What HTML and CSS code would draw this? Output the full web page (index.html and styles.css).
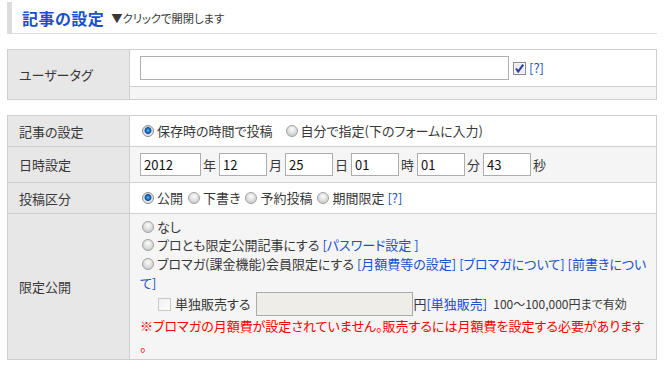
FILE: index.html
```html
<!DOCTYPE html>
<html lang="ja">
  <head>
    <meta charset="UTF-8" />
    <title>記事の設定</title>
    <link rel="stylesheet" href="styles.css">
  </head>
  <body>
    <div class="heading">
      <span class="heading-title">記事の設定</span>
      <span class="heading-note">▼クリックで開閉します</span>
    </div>

    <table class="form-table">
      <tr>
        <th rowspan="2">ユーザータグ</th>
        <td>
          <div class="line">
            <input type="text" class="tag-input" />
            <svg class="check-icon" width="13" height="13" viewBox="0 0 13 13">
              <rect x="0.5" y="0.5" width="12" height="12" fill="#dfe3ee" stroke="#8a8a8a" />
              <rect x="1.5" y="1.5" width="10" height="10" fill="#e9ecf4" stroke="#f6f7fb" />
              <path d="M3 6.5 L5.2 9.6 L10.2 2.6" fill="none" stroke="#2b3f9a" stroke-width="2" />
            </svg>
            <a class="help" href="#">[?]</a>
          </div>
        </td>
      </tr>
      <tr>
        <td class="spacer"></td>
      </tr>
    </table>

    <table class="form-table">
      <tr>
        <th>記事の設定</th>
        <td>
          <div class="line">
            <input type="radio" name="post-time" checked />
            <span class="gap-wide">保存時の時間で投稿</span>
            <input type="radio" name="post-time" />
            <span>自分で指定(下のフォームに入力)</span>
          </div>
        </td>
      </tr>
      <tr class="row-alt">
        <th>日時設定</th>
        <td>
          <div class="line">
            <input type="text" class="date-input year" value="2012" /><span class="unit">年</span>
            <input type="text" class="date-input" value="12" /><span class="unit">月</span>
            <input type="text" class="date-input" value="25" /><span class="unit">日</span>
            <input type="text" class="date-input" value="01" /><span class="unit">時</span>
            <input type="text" class="date-input" value="01" /><span class="unit">分</span>
            <input type="text" class="date-input" value="43" /><span class="unit">秒</span>
          </div>
        </td>
      </tr>
      <tr>
        <th>投稿区分</th>
        <td>
          <div class="line">
            <input type="radio" name="status" checked /><span class="gap">公開</span>
            <input type="radio" name="status" /><span class="gap">下書き</span>
            <input type="radio" name="status" /><span class="gap">予約投稿</span>
            <input type="radio" name="status" /><span class="gap">期間限定</span>
            <a class="help" href="#">[?]</a>
          </div>
        </td>
      </tr>
      <tr class="row-alt">
        <th>限定公開</th>
        <td class="limited">
          <label class="choice"><input type="radio" name="limit" />なし</label>
          <label class="choice"><input type="radio" name="limit" />プロとも限定公開記事にする <a href="#">[パスワード設定 ]</a></label>
          <label class="choice wrap"><input type="radio" name="limit" />ブロマガ(課金機能)会員限定にする <a href="#">[月額費等の設定]</a> <a href="#">[ブロマガについて]</a> <a href="#">[前書きについて]</a></label>
          <div class="sale">
            <span class="sale-check"></span>
            <span class="sale-label">単独販売する</span>
            <input type="text" class="price-input" disabled /><span>円</span><a href="#">[単独販売]</a>
            <span class="price-note">100〜100,000円まで有効</span>
          </div>
          <p class="warning">※ブロマガの月額費が設定されていません。販売するには月額費を設定する必要があります。</p>
        </td>
      </tr>
    </table>
  </body>
</html>
```

FILE: styles.css
```css
body {
  margin: 0;
  padding: 2px 8px 0 7px;
  font-family: "Noto Sans CJK JP", sans-serif;
  font-size: 13px;
  font-feature-settings: "palt";
  color: #383838;
  background: #fff;
}

a {
  color: #1c4fc9;
  text-decoration: none;
}

.heading {
  display: flex;
  align-items: center;
  height: 31px;
  padding-left: 10px;
  border-left: 5px solid #dcdcdc;
  border-bottom: 1px solid #dcdcdc;
}

.heading-title {
  color: #1c4fc9;
  font-size: 16px;
  font-weight: 700;
  letter-spacing: 0.5px;
}

.heading-note {
  margin-left: 7px;
  font-size: 11.3px;
}

.form-table {
  width: 100%;
  margin-top: 15px;
  border-collapse: collapse;
  border: 1px solid #cfcfcf;
}

.form-table th {
  width: 100px;
  padding: 0 10px 0 11px;
  background: #e7e7e7;
  border: 1px solid #cfcfcf;
  font-weight: normal;
  text-align: left;
}

.form-table td {
  padding: 6px 10px;
  border: 1px solid #cfcfcf;
  line-height: 18px;
}

.form-table td.spacer {
  height: 12px;
  padding: 0;
  background: #f5f5f5;
}

.row-alt td {
  background: #f5f5f5;
}

.line {
  display: flex;
  align-items: center;
  min-height: 18px;
}

.tag-input {
  box-sizing: border-box;
  width: 369px;
  height: 24px;
  margin: 0;
  border: 1px solid #aeaeb3;
}

.check-icon {
  margin: 0 3px 0 4px;
}

.help {
  font-size: 13px;
}

input[type="radio"] {
  appearance: none;
  box-sizing: border-box;
  width: 12px;
  height: 12px;
  margin: 0 3px 0 2px;
  border: 1px solid #a3a3a3;
  border-radius: 50%;
  background: radial-gradient(circle at 50% 35%, #fdfdfd 0, #e6e6e6 3px, #cfcfcf 6px);
  flex: none;
}

input[type="radio"]:checked {
  border-color: #8c8c8c;
  background: radial-gradient(circle at 50% 45%, #7fd0ff 0, #2a88d8 1.2px, #0a4f9a 3px, #d9d9d9 3.8px, #f4f4f4 6px);
}

.gap {
  margin-right: 3px;
}

.gap-wide {
  margin-right: 11px;
}

.date-input {
  box-sizing: border-box;
  width: 48px;
  height: 23px;
  margin: 0 2px 0 0;
  padding: 0 3px;
  border: 1px solid #abadb3;
  font: inherit;
  color: #111;
}

.date-input.year {
  width: 61px;
}

.unit {
  margin-right: 3px;
}

.form-table td.limited {
  padding: 4px 8px 3px 10px;
  vertical-align: top;
}

.choice {
  display: block;
  line-height: 18px;
}

.choice.wrap {
  line-height: 19px;
}

.choice input[type="radio"] {
  vertical-align: -1px;
}

.sale {
  display: flex;
  align-items: center;
  height: 24px;
  padding-left: 18px;
}

.sale-check {
  box-sizing: border-box;
  width: 13px;
  height: 13px;
  margin-right: 4px;
  border: 1px solid #c9c9c9;
  background: linear-gradient(135deg, #f0f0f0, #fdfdfd);
}

.sale-label {
  margin-right: 6px;
}

.price-input {
  box-sizing: border-box;
  width: 157px;
  height: 24px;
  margin: 0;
  border: 1px solid #acacac;
  background: #eeede8;
}

.price-note {
  margin-left: 6px;
  font-size: 12px;
}

.warning {
  margin: 0;
  color: #ff0000;
  line-height: 20px;
  line-break: anywhere;
}
```
